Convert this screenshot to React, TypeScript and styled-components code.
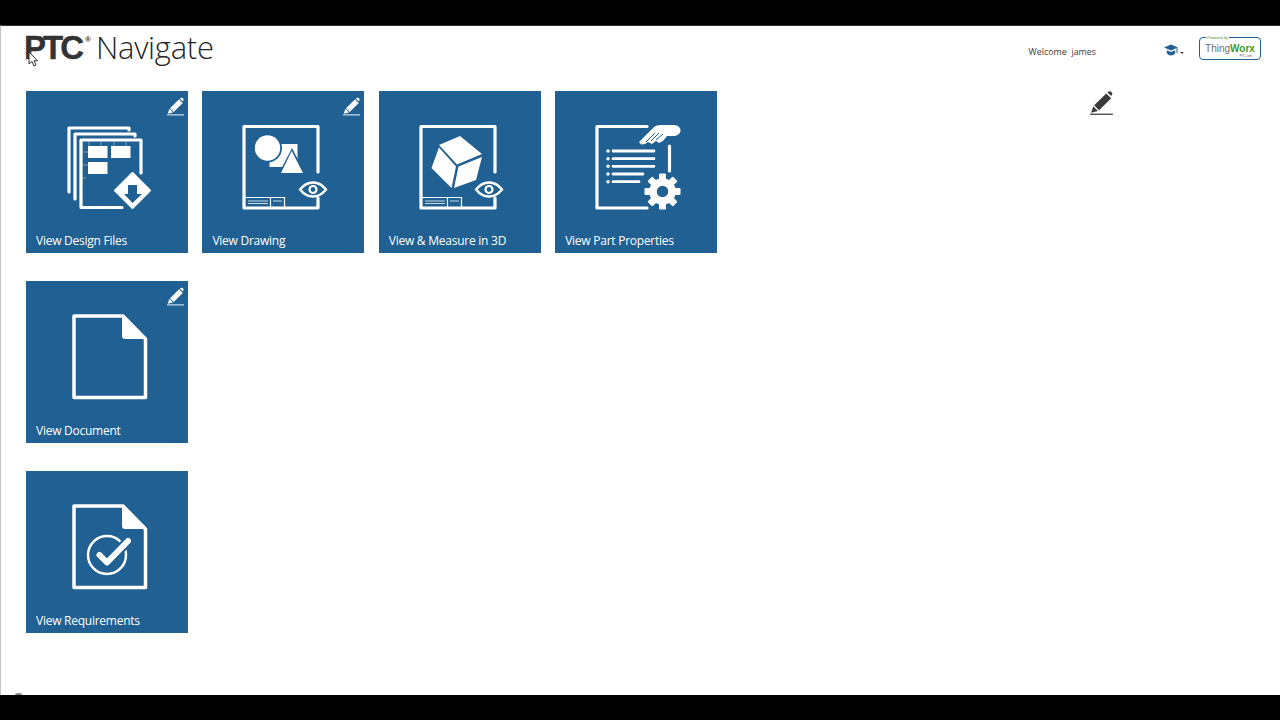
import React from 'react';
import styled, { createGlobalStyle } from 'styled-components';

const BLUE = '#206092';

const GlobalStyle = createGlobalStyle`
  html, body {
    margin: 0;
    padding: 0;
    height: 100%;
    background: #000;
  }
  #root {
    height: 100%;
  }
`;

const Page = styled.div`
  position: relative;
  display: flex;
  flex-direction: column;
  width: 1280px;
  height: 720px;
  overflow: hidden;
  font-family: 'Open Sans', 'Liberation Sans', sans-serif;
`;

const BlackBar = styled.div`
  flex: 0 0 25px;
  background: #000;
`;

const Main = styled.main`
  flex: 1;
  display: flex;
  flex-direction: column;
  background: #fff;
  border-left: 1px solid #c4c4c4;
  border-top: 1px solid #2a2f3a;
`;

const Header = styled.header`
  flex: 0 0 65px;
  display: flex;
  align-items: flex-start;
  padding: 0 19px 0 23px;
`;

const Logo = styled.div`
  display: flex;
  align-items: baseline;
  height: 40px;
  margin-top: 1px;
  color: #333;
`;

const LogoMark = styled.span`
  font-family: 'Liberation Sans', Arial, sans-serif;
  font-weight: 700;
  font-size: 33px;
  line-height: 40px;
  letter-spacing: -3px;
  -webkit-text-stroke: 0.4px #333;
`;

const LogoReg = styled.sup`
  font-family: 'Liberation Sans', Arial, sans-serif;
  font-weight: 700;
  font-size: 8px;
  line-height: 1;
  margin: 0 5px 0 4px;
  align-self: flex-start;
  padding-top: 9px;
`;

const LogoName = styled.span`
  font-weight: 300;
  font-size: 31px;
  line-height: 40px;
  letter-spacing: -0.28px;
  color: #262626;
`;

const UserArea = styled.div`
  margin-left: auto;
  display: flex;
  align-items: center;
  height: 24px;
  margin-top: 10px;
`;

const Welcome = styled.span`
  margin: 7px 68px 0 0;
  font-size: 8.9px;
  color: #3a3a3a;
  white-space: pre;
`;

const HelpButton = styled.div`
  display: flex;
  align-items: flex-end;
  gap: 2px;
  margin: 4px 15px 0 0;
`;

const Caret = styled.span`
  width: 0;
  height: 0;
  margin-bottom: 2px;
  border-left: 2px solid transparent;
  border-right: 2px solid transparent;
  border-top: 2px solid #444;
`;

const Badge = styled.div`
  position: relative;
  display: flex;
  align-items: center;
  justify-content: center;
  width: 62px;
  height: 23px;
  box-sizing: border-box;
  border: 1.5px solid ${BLUE};
  border-radius: 4px;
  font-family: 'Liberation Sans', Arial, sans-serif;
  font-size: 10px;
  color: #6a6f73;
`;

const BadgeWorx = styled.b`
  color: #3f9a2c;
`;

const BadgeTop = styled.span`
  position: absolute;
  top: -3px;
  left: 6px;
  padding: 0 1px;
  background: #fff;
  font-size: 4px;
  line-height: 5px;
  color: #3f9a2c;
`;

const BadgeBottom = styled.span`
  position: absolute;
  bottom: 1px;
  right: 8px;
  font-size: 3px;
  line-height: 3px;
  color: #555;
`;

const Content = styled.div`
  flex: 1;
  display: flex;
  justify-content: space-between;
  padding: 0 166px 0 25px;
`;

const Rows = styled.div`
  display: flex;
  flex-direction: column;
  gap: 28px;
`;

const Row = styled.div`
  display: flex;
  gap: 14.4px;
`;

const Tile = styled.div`
  position: relative;
  display: flex;
  flex-direction: column;
  width: 162px;
  height: 162px;
  background: ${BLUE};
`;

const TileArt = styled.svg`
  display: block;
  flex: 0 0 138px;
  width: 162px;
  height: 138px;
  fill: none;
  stroke: #fff;
  stroke-width: 3.2;
`;

const TileLabel = styled.div`
  flex: 1;
  display: flex;
  align-items: center;
  padding: 0 0 2px 10px;
  font-size: 12px;
  letter-spacing: -0.25px;
  color: #fff;
`;

const TilePencil = styled.svg`
  position: absolute;
  top: 6px;
  right: 4px;
  width: 17px;
  height: 19px;
  color: #fff;
`;

const PagePencil = styled.svg`
  width: 25px;
  height: 24px;
  color: #3a3a3a;
`;

const Cursor = styled.svg`
  position: absolute;
  left: 28px;
  top: 51px;
  width: 10px;
  height: 16px;
`;

const BottomSmudge = styled.span`
  position: absolute;
  left: 15px;
  top: 693px;
  width: 7px;
  height: 2px;
  border-radius: 4px 4px 0 0;
  background: #8a8a8a;
`;

const Pencil = ({ as: Svg }: { as: typeof TilePencil }) => (
  <Svg viewBox="0 0 18 19">
    <path
      fill="currentColor"
      d="M13.600 1 15 .3c.5-.2.9-.2 1.300.1l1 1c.4.400.4.900.1 1.400l-.8 1.200zM12.800 1.900l3.900 3.900-9.600 9.400-3.900-3.900zM2.500 12l3.700 3.900-5.400 1.400z"
    />
    <path stroke="currentColor" strokeWidth="1" d="M0 18.400h18" />
  </Svg>
);

const Eye = ({ cx, cy }: { cx: number; cy: number }) => (
  <g transform={`translate(${cx} ${cy})`}>
    <path
      strokeWidth="2.400"
      d="M-13 0C-9-5-4.500-7 0-7S9-5 13 0C9 5 4.500 7 0 7S-9 5-13 0Z"
    />
    <circle r="3.500" strokeWidth="2.200" />
  </g>
);

const ViewerFrame = ({ eyeX }: { eyeX: number }) => (
  <>
    <path d="M116 81V35.500H42V117H116V107" strokeLinejoin="round" strokeLinecap="round" />
    <path strokeWidth="1.200" d="M43 106.500H82.500V116M68.500 106.500V116" />
    <path strokeWidth="1" opacity=".75" d="M46 110H66M46 112.500H66M71 110H80" />
    <Eye cx={eyeX} cy={98.500} />
  </>
);

const DesignFilesArt = () => (
  <TileArt viewBox="0 0 162 138">
    <g strokeLinejoin="round" strokeLinecap="round">
      <path d="M43 101V37H103V39" />
      <path d="M49 108V43H109V45" />
      <path d="M96 116.500H55V49H115V82" />
    </g>
    <path strokeWidth=".7" opacity=".55" d="M63 49V55M75 49V55M88 49V55M100 49V55M55 61H62M55 74H62M55 87H60" />
    <g fill="#fff" stroke="none">
      <rect x="62" y="55" width="19.500" height="12" />
      <rect x="85" y="55" width="19.500" height="12" />
      <rect x="62" y="71" width="19.500" height="12" />
    </g>
    <path fill="#fff" stroke="#fff" strokeWidth="2" strokeLinejoin="round" d="M106.500 82 124 99.500 106.500 117 89 99.500Z" />
    <path fill={BLUE} stroke="none" d="M102 94H111V103H116L106.500 112 98 103H102Z" />
  </TileArt>
);

const DrawingArt = () => (
  <TileArt viewBox="0 0 162 138">
    <ViewerFrame eyeX={111} />
    <rect x="67.500" y="53" width="28" height="23" fill="#fff" stroke="none" />
    <circle cx="65.500" cy="57" r="14.500" fill={BLUE} stroke="none" />
    <circle cx="65.500" cy="57" r="12.700" fill="#fff" stroke="none" />
    <path d="M90 57 104 84H76Z" fill={BLUE} stroke="none" />
    <path d="M89.700 60 101 82H79Z" fill="#fff" stroke="none" />
  </TileArt>
);

const MeasureArt = () => (
  <TileArt viewBox="0 0 162 138">
    <ViewerFrame eyeX={110} />
    <g fill="#fff" stroke="none">
      <path d="M60 54 81 45 103 63 78 73.500Z" />
      <path d="M60 56.500 77 75.500 72.500 97 52.500 77Z" />
      <path d="M79.500 75.500 103 66 97 89 75 97Z" />
    </g>
  </TileArt>
);

const GEAR_TEETH = [0, 45, 90, 135, 180, 225, 270, 315];

const PropertiesArt = () => (
  <TileArt viewBox="0 0 162 138">
    <path d="M92 35.500H42V117H92" strokeLinecap="round" strokeLinejoin="round" />
    <path d="M114.500 55V80" strokeLinecap="round" />
    <path
      fill="#fff"
      stroke="none"
      d="M84 51 98 37C100 35 102 34 106 34H119C123 34 126 37 125.500 40 125 43 122 45 118 45H112L108 50 104 52 101 50 97 53 93 51 90 53 86 53.500Z"
    />
    <path stroke={BLUE} strokeWidth="1" d="M91 51 100 42M96 50 104 42M101 49 108 43" />
    <g strokeLinecap="round" strokeWidth="2.800">
      <path d="M58 60H99M58 67.700H99M58 75.300H99M58 83H88M58 90.700H84" />
    </g>
    <g fill="#fff" stroke="none">
      <circle cx="53" cy="60" r="1.700" />
      <circle cx="53" cy="67.700" r="1.700" />
      <circle cx="53" cy="75.300" r="1.700" />
      <circle cx="53" cy="83" r="1.700" />
      <circle cx="53" cy="90.700" r="1.700" />
    </g>
    <g transform="translate(107.500 100.500)">
      {GEAR_TEETH.map((deg) => (
        <rect key={deg} x="-3.500" y="-18" width="7" height="8" rx="1.200" fill="#fff" stroke="none" transform={`rotate(${deg})`} />
      ))}
      <circle r="9.500" strokeWidth="7.500" />
    </g>
  </TileArt>
);

const SheetOutline = () => (
  <>
    <path
      strokeWidth="3.500"
      strokeLinejoin="round"
      d="M97 35H48V116.500H119.500V58L97 35Z"
    />
    <path fill="#fff" stroke="#fff" strokeWidth="2" strokeLinejoin="round" d="M97 36V55C97 56.500 98 57 99 57H118Z" />
  </>
);

const DocumentArt = () => (
  <TileArt viewBox="0 0 162 138">
    <SheetOutline />
  </TileArt>
);

const RequirementsArt = () => (
  <TileArt viewBox="0 0 162 138">
    <SheetOutline />
    <circle cx="81" cy="84" r="19" strokeWidth="2.500" />
    <path stroke={BLUE} strokeWidth="10" d="M73.500 84 81 91.500 102.500 69.500" />
    <path strokeWidth="6" strokeLinecap="round" strokeLinejoin="round" d="M73.500 84 81 91.500 102 70" />
  </TileArt>
);

const tileRows = [
  [
    { label: 'View Design Files', art: <DesignFilesArt />, editable: true },
    { label: 'View Drawing', art: <DrawingArt />, editable: true },
    { label: 'View & Measure in 3D', art: <MeasureArt />, editable: false },
    { label: 'View Part Properties', art: <PropertiesArt />, editable: false },
  ],
  [{ label: 'View Document', art: <DocumentArt />, editable: true }],
  [{ label: 'View Requirements', art: <RequirementsArt />, editable: false }],
];

const App = () => {
  return (
    <>
      <GlobalStyle />
      <Page>
        <BlackBar />
        <Main>
          <Header>
            <Logo>
              <LogoMark>PTC</LogoMark>
              <LogoReg>®</LogoReg>
              <LogoName>Navigate</LogoName>
            </Logo>
            <UserArea>
              <Welcome>Welcome  james</Welcome>
              <HelpButton>
                <svg width="14" height="12" viewBox="0 0 14 12">
                  <path fill={BLUE} d="M7 .5 14 3.500 7 6.500 0 3.500Z" />
                  <path fill={BLUE} d="M2.800 6.200 7 8 11.200 6.200V9C10 10.800 8.500 11.500 7 11.500S4 10.800 2.800 9Z" />
                  <path stroke={BLUE} fill="none" d="M13 4V9" />
                </svg>
                <Caret />
              </HelpButton>
              <Badge>
                <BadgeTop>Powered by</BadgeTop>
                <span>
                  Thing<BadgeWorx>Worx</BadgeWorx>
                </span>
                <BadgeBottom>PTC.com</BadgeBottom>
              </Badge>
            </UserArea>
          </Header>
          <Content>
            <Rows>
              {tileRows.map((row, i) => (
                <Row key={i}>
                  {row.map((tile) => (
                    <Tile key={tile.label}>
                      {tile.art}
                      <TileLabel>{tile.label}</TileLabel>
                      {tile.editable && <Pencil as={TilePencil} />}
                    </Tile>
                  ))}
                </Row>
              ))}
            </Rows>
            <div>
              <Pencil as={PagePencil} />
            </div>
          </Content>
        </Main>
        <BlackBar />
        <Cursor viewBox="0 0 10 16">
          <path fill="#fff" stroke="#333" strokeWidth="1" d="M1 1V13L4 10.500 6 15 8 14 6 9.800H9.500Z" />
        </Cursor>
        <BottomSmudge />
      </Page>
    </>
  );
};

export default App;
